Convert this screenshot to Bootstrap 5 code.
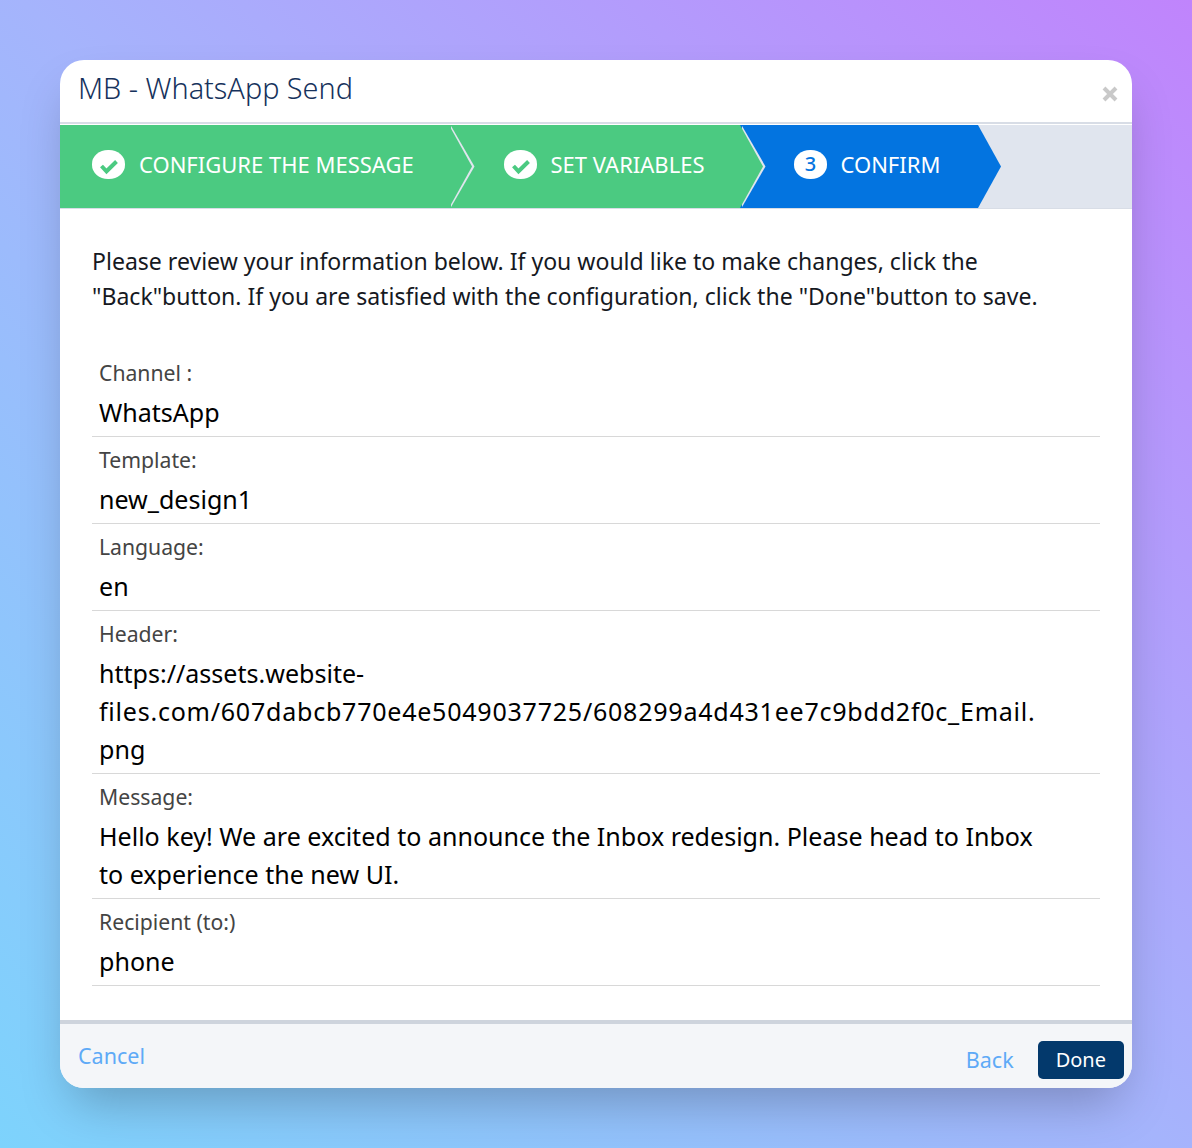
<!doctype html>
<html lang="en"><head><meta charset="utf-8">
<link rel="stylesheet" href="https://cdn.jsdelivr.net/npm/bootstrap@5.3.0/dist/css/bootstrap.min.css">
<style>
html,body{height:100%}
body{margin:0;padding:60px;background:linear-gradient(45deg,#7dd3fc 0%,#a5b4fc 50%,#c084fc 100%);font-family:"Noto Sans",sans-serif;height:1148px;overflow:hidden}
.dlg{width:1072px;height:1028px;background:#fff;border-radius:24px;overflow:hidden;box-shadow:0 25px 50px -12px rgba(0,0,0,.25)}
.dlg-head{height:64px;border-bottom:2px solid #d8dde6;padding:10px 14px 0 18px;color:#16325c;font-size:28.8px;font-weight:300;line-height:36px}
.dlg-x{margin-top:16px;line-height:0}
.stepper{height:84px;background:#e0e5ee;border-bottom:1px solid #d8dde6;margin-top:1px}
.stp{position:relative;height:83px;color:#fff;font-size:22px;gap:13.5px;padding-bottom:4px}
.stp::before,.stp::after{content:"";position:absolute;top:0;left:100%;height:100%;width:23px;clip-path:polygon(0 0,100% 50%,0 100%)}
.stp::after{background:inherit}
.stp-done{background:#4bca81}
.stp-done::before{background:#e0e5ee;margin-left:1.5px;width:24px;z-index:1}
.stp-done::after{z-index:2}
.stp-cur{background:#0374e0}
.stp-a{width:389px;padding-left:32px;z-index:2;gap:14px}
.stp-b{width:291px;padding-left:55px;z-index:1}
.stp-c{width:238px;padding-left:54px}
.stp-ic{width:33px;height:29px;border-radius:16px/14px;background:#fff;color:#0374e0;font-size:20px;font-weight:500;flex:none}
.dlg-body{padding:35px 32px 0;height:812px}
.intro{font-size:23.05px;line-height:35px;color:#16191f;margin:0 0 36px}
.fld{border-bottom:1px solid #d8d8d8;padding:8px 7px 5px}
.fld-l{font-size:21.2px;color:#444;line-height:29px;margin-bottom:6px}
.fld-v{font-size:25.05px;line-height:38px;color:#000;max-width:960px}
.fld-url{letter-spacing:.75px}
.dlg-foot{height:68px;background:#f4f6f9;border-top:4px solid #ced4dd;padding:17px 8px 0 18px}
.lnk{color:#5eaaf7;font-size:21.5px;line-height:30px;text-decoration:none}
.btn-done{background:#03396c;color:#fff;font-size:20px;line-height:26px;border-radius:5px;padding:6px 18px;border:0}
</style></head><body>
<div class="dlg d-flex flex-column">
 <div class="dlg-head d-flex justify-content-between align-items-start"><span>MB - WhatsApp Send</span><span class="dlg-x"><svg width="16" height="16" viewBox="0 0 16 16"><path d="M2 2l12 12M14 2L2 14" fill="none" stroke="#c9c9c9" stroke-width="4"/></svg></span></div>
 <div class="stepper d-flex">
  <div class="stp stp-done stp-a d-flex align-items-center"><span class="stp-ic d-flex"><svg width="33" height="29" viewBox="0 0 33 29"><path d="M9.5 16l5 5.3 10-9.8" fill="none" stroke="#4bca81" stroke-width="4"/></svg></span><span>CONFIGURE THE MESSAGE</span></div>
  <div class="stp stp-done stp-b d-flex align-items-center"><span class="stp-ic d-flex"><svg width="33" height="29" viewBox="0 0 33 29"><path d="M9.5 16l5 5.3 10-9.8" fill="none" stroke="#4bca81" stroke-width="4"/></svg></span><span>SET VARIABLES</span></div>
  <div class="stp stp-cur stp-c d-flex align-items-center"><span class="stp-ic d-flex align-items-center justify-content-center">3</span><span>CONFIRM</span></div>
 </div>
 <div class="dlg-body">
  <p class="intro">Please review your information below. If you would like to make changes, click the<br>"Back"button. If you are satisfied with the configuration, click the "Done"button to save.</p>
  <div class="fld"><div class="fld-l">Channel :</div><div class="fld-v">WhatsApp</div></div>
  <div class="fld"><div class="fld-l">Template:</div><div class="fld-v">new_design1</div></div>
  <div class="fld"><div class="fld-l">Language:</div><div class="fld-v">en</div></div>
  <div class="fld"><div class="fld-l">Header:</div><div class="fld-v">https://assets.website-<br><span class="fld-url">files.com/607dabcb770e4e5049037725/608299a4d431ee7c9bdd2f0c_Email.</span><br>png</div></div>
  <div class="fld"><div class="fld-l">Message:</div><div class="fld-v">Hello key! We are excited to announce the Inbox redesign. Please head to Inbox<br>to experience the new UI.</div></div>
  <div class="fld"><div class="fld-l">Recipient (to:)</div><div class="fld-v">phone</div></div>
 </div>
 <div class="dlg-foot d-flex justify-content-between align-items-start">
  <a class="lnk" href="#">Cancel</a>
  <div class="d-flex align-items-center gap-4"><a class="lnk" href="#">Back</a><button class="btn btn-done">Done</button></div>
 </div>
</div>
<script src="https://cdn.jsdelivr.net/npm/bootstrap@5.3.0/dist/js/bootstrap.bundle.min.js"></script>
</body></html>
